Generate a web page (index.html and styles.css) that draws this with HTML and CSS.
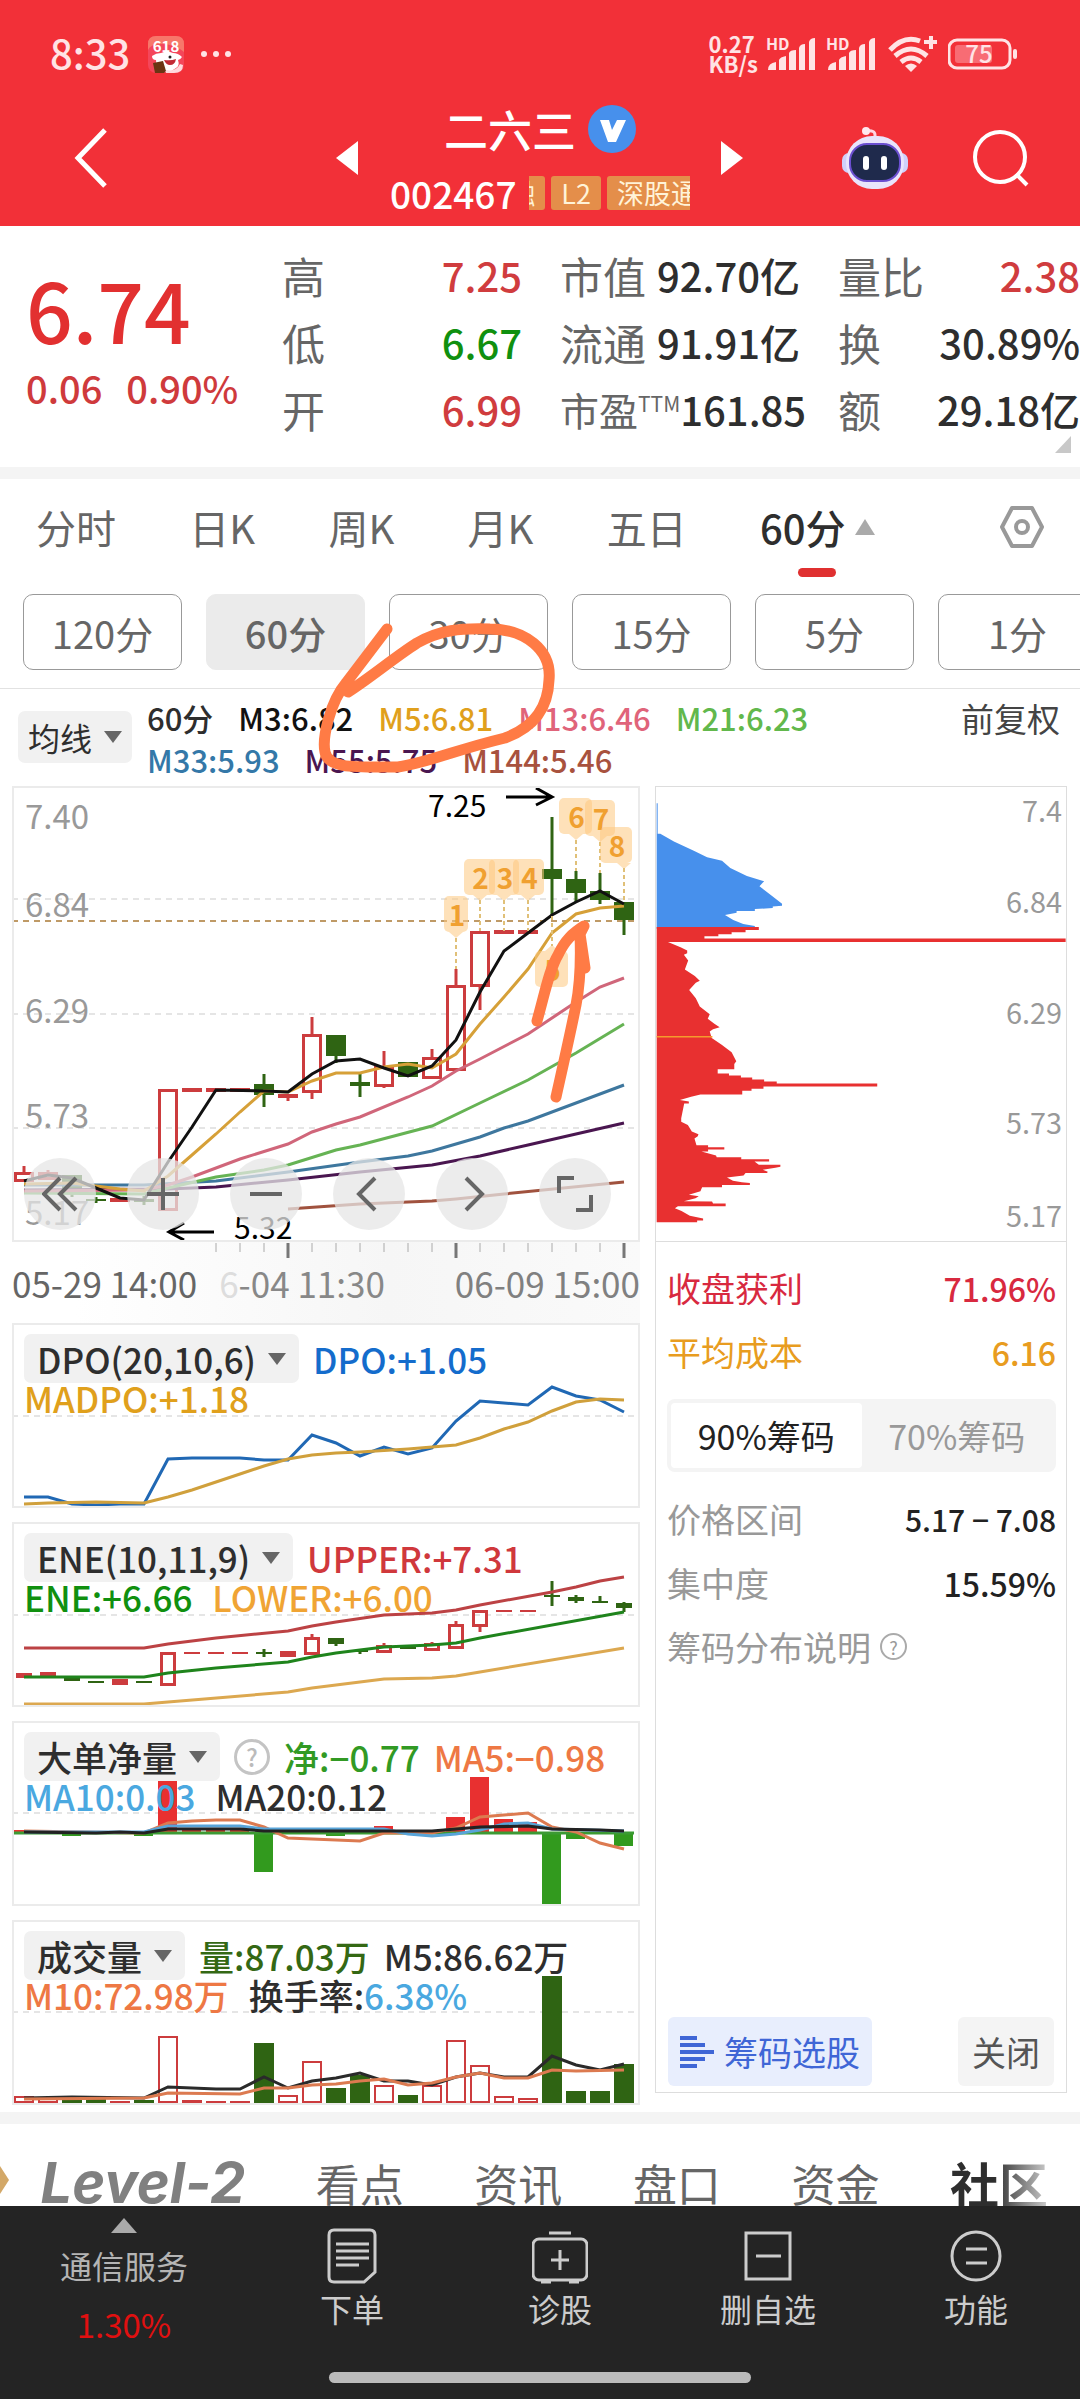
FILE: index.html
```html
<!DOCTYPE html>
<html lang="zh-CN">
<head>
    <meta charset="UTF-8">
    <meta name="viewport" content="width=device-width, initial-scale=1.0">
    <title>二六三 002467</title>
    <link rel="stylesheet" href="styles.css">
</head>
<body>
    <header class="top">
        <div class="status">
            <span class="clock">8:33</span>
            <svg class="app-icon" viewBox="0 0 36 37" width="36" height="37">
                <rect width="36" height="37" rx="8" fill="#f4465a"/>
                <path d="M8 0h20q8 0 8 8v8q-10-8-22-8T0 14V8q0-8 8-8z" fill="#f7776a"/>
                <text x="18" y="16" text-anchor="middle" class="app-num">618</text>
                <path d="M4 20q4-3 9-3 6-3 12 0 5 0 9 4-2 3-4 3 2 6-2 8l-6 4H12q-4-4-4-12-4 0-4-4z" fill="#fff"/>
                <path d="M16 24q7 1 12-1-1 6-6 6-4 0-6-5z" fill="#c22a35"/>
                <circle cx="22" cy="21" r="1.5" fill="#222"/>
                <path d="M5 27l10-2 3 10-2 2H7z" fill="#6b3513"/>
                <path d="M18 34q10 2 14-6l3 1q0 8-9 8h-8z" fill="#ffd9dc"/>
            </svg>
            <svg class="dots" viewBox="0 0 32 8" width="32" height="8" fill="#ffe3e5">
                <circle cx="4" cy="4" r="3"/><circle cx="16" cy="4" r="3"/><circle cx="28" cy="4" r="3"/>
            </svg>
            <span class="speed"><b>0.27</b><b>KB/s</b></span>
            <svg viewBox="0 0 52 36" width="52" height="36" class="signal">
                <text x="0" y="14" class="hd">HD</text>
                <path d="M2 34q0-7 8-8v8zM13 34V24q1-3 7-4v14zM23 34V17q1-3 7-3v20zM33 34V12q1-4 6-4v26zM43 34V6q1-4 6-4v32z"/>
            </svg>
            <svg viewBox="0 0 52 36" width="52" height="36" class="signal second">
                <text x="0" y="14" class="hd">HD</text>
                <path d="M2 34q0-7 8-8v8zM13 34V24q1-3 7-4v14zM23 34V17q1-3 7-3v20zM33 34V12q1-4 6-4v26zM43 34V6q1-4 6-4v32z"/>
            </svg>
            <svg viewBox="0 0 50 36" width="50" height="36" class="wifi">
                <g fill="none" stroke="#ffe3e5" stroke-width="5">
                    <path d="M2 14Q16-1 32 5"/><path d="M7 20Q23 6 39 20"/><path d="M13 26Q23 18 33 26"/>
                    <path d="M36 6h13M43 0v13" stroke-width="4"/>
                </g>
                <path d="M17 30q6-5 12 0l-6 6z" fill="#ffe3e5"/>
            </svg>
            <svg viewBox="0 0 70 32" width="70" height="32" class="battery">
                <rect x="1" y="2" width="61" height="28" rx="8" fill="none" stroke="#ffe3e5" stroke-width="3"/>
                <rect x="7" y="7" width="37" height="18" rx="3" fill="#f86c74"/>
                <rect x="65" y="11" width="4" height="10" rx="2" fill="#ffe3e5"/>
                <text x="31" y="25" text-anchor="middle" class="level">75</text>
            </svg>
        </div>
        <div class="title-bar">
            <button class="back" aria-label="返回">
                <svg viewBox="0 0 34 60" width="34" height="60"><path d="M31 2L4 30l27 28" fill="none" stroke="#fff" stroke-width="5"/></svg>
            </button>
            <button class="prev" aria-label="上一只">
                <svg viewBox="0 0 22 34" width="22" height="34"><path d="M22 0v34L0 17z" fill="#fff"/></svg>
            </button>
            <div class="stock">
                <h1>二六三
                    <svg viewBox="0 0 48 48" width="48" height="48">
                        <circle cx="24" cy="24" r="24" fill="#4790ec"/>
                        <path d="M12 15h9l3 10 5-10h9l-10 22h-8z" fill="#fff"/>
                    </svg>
                </h1>
                <div class="code-row">
                    <span class="code">002467</span>
                    <div class="tags">
                        <span>融</span><span>L2</span><span>深股通</span>
                    </div>
                </div>
            </div>
            <button class="next" aria-label="下一只">
                <svg viewBox="0 0 22 34" width="22" height="34"><path d="M0 0v34l22-17z" fill="#fff"/></svg>
            </button>
            <button aria-label="智能助手">
                <svg viewBox="0 0 66 62" width="66" height="62">
                    <path d="M33 12V8q0-5-8-4" fill="none" stroke="#ffd5e2" stroke-width="3"/>
                    <circle cx="24" cy="4" r="4" fill="#ffe8ef"/>
                    <rect x="0" y="26" width="14" height="20" rx="7" fill="#cfd0fb"/>
                    <rect x="52" y="26" width="14" height="20" rx="7" fill="#cfd0fb"/>
                    <rect x="4" y="9" width="58" height="53" rx="26" fill="#e9e4fb"/>
                    <rect x="8" y="17" width="50" height="37" rx="17" fill="#1f2a4c" stroke="#6b4fd0" stroke-width="2"/>
                    <rect x="21" y="29" width="6" height="14" rx="3" fill="#fff"/>
                    <rect x="39" y="29" width="6" height="14" rx="3" fill="#fff"/>
                </svg>
            </button>
            <button aria-label="搜索">
                <svg viewBox="0 0 56 58" width="56" height="58" fill="none" stroke="#fff" stroke-width="4">
                    <circle cx="27" cy="28" r="25"/><path d="M43 45l11 11"/>
                </svg>
            </button>
        </div>
    </header>

    <section class="quote">
        <div class="price">
            <strong>6.74</strong>
            <p><span>0.06</span><span>0.90%</span></p>
        </div>
        <dl>
            <div><dt>高</dt><dd class="up">7.25</dd></div>
            <div><dt>低</dt><dd class="down">6.67</dd></div>
            <div><dt>开</dt><dd class="up">6.99</dd></div>
        </dl>
        <dl>
            <div><dt>市值</dt><dd>92.70亿</dd></div>
            <div><dt>流通</dt><dd>91.91亿</dd></div>
            <div><dt class="pe">市盈<sup>TTM</sup></dt><dd>161.85</dd></div>
        </dl>
        <dl>
            <div><dt>量比</dt><dd class="up">2.38</dd></div>
            <div><dt>换</dt><dd>30.89%</dd></div>
            <div><dt>额</dt><dd>29.18亿</dd></div>
        </dl>
        <svg class="more" viewBox="0 0 16 17" width="16" height="17"><path d="M16 0v17H0z" fill="#c8c8c8"/></svg>
    </section>

    <main class="kline">
        <nav class="periods">
            <button>分时</button>
            <button>日K</button>
            <button>周K</button>
            <button>月K</button>
            <button>五日</button>
            <button class="active"><span>60分</span>
                <svg viewBox="0 0 20 16" width="20" height="16"><path d="M10 0l10 16H0z" fill="#aaa"/></svg>
            </button>
            <button class="settings" aria-label="设置">
                <svg viewBox="0 0 44 42" width="44" height="42" fill="none" stroke="#999" stroke-width="4">
                    <path d="M12 2h20l10 19-10 19H12L2 21z" stroke-linejoin="round"/><circle cx="22" cy="21" r="6"/>
                </svg>
            </button>
        </nav>
        <div class="minutes">
            <button>120分</button>
            <button class="active">60分</button>
            <button>30分</button>
            <button>15分</button>
            <button>5分</button>
            <button>1分</button>
        </div>

        <div class="ma-bar">
            <label class="picker">
                <select aria-label="主图指标"><option>均线</option></select>
                <svg viewBox="0 0 18 12" width="18" height="12"><path d="M0 0h18L9 12z"/></svg>
            </label>
            <div class="ma-list">
                <p><span class="dark">60分</span><span class="c-m3">M3:6.82</span><span class="c-m5">M5:6.81</span><span class="c-m13">M13:6.46</span><span class="c-m21">M21:6.23</span></p>
                <p><span class="c-m33">M33:5.93</span><span class="c-m55">M55:5.75</span><span class="c-m144">M144:5.46</span></p>
            </div>
            <span class="adjust">前复权</span>
        </div>

        <div class="columns">
            <div class="charts">
                <div class="chart">
                    <svg id="main-chart" viewBox="14 788 624 452"></svg>
                    <div class="tools">
                        <button aria-label="最早"><svg viewBox="0 0 36 36"><path d="M18 2L2 18l16 16M34 2L18 18l16 16"/></svg></button>
                        <button aria-label="放大"><svg viewBox="0 0 36 36"><path d="M18 2v32M2 18h32"/></svg></button>
                        <button aria-label="缩小"><svg viewBox="0 0 36 36"><path d="M2 18h32"/></svg></button>
                        <button aria-label="左移"><svg viewBox="0 0 36 36"><path d="M24 2L8 18l16 16"/></svg></button>
                        <button aria-label="右移"><svg viewBox="0 0 36 36"><path d="M12 2l16 16-16 16"/></svg></button>
                        <button aria-label="全屏"><svg viewBox="0 0 36 36"><path d="M2 17V2h15M34 19v15H19"/></svg></button>
                    </div>
                </div>
                <div class="axis">
                    <svg id="ticks" viewBox="12 1242 628 18"></svg>
                    <p><span>05-29 14:00</span><span class="mid"><i>6</i>-04 11:30</span><span class="last">06-09 15:00</span></p>
                </div>

                <div class="chart sub">
                    <svg id="dpo-chart" viewBox="14 1325 624 181"></svg>
                    <div class="legend">
                        <p>
                            <label class="picker">
                                <select aria-label="副图指标一"><option>DPO(20,10,6)</option></select>
                                <svg viewBox="0 0 18 12" width="18" height="12"><path d="M0 0h18L9 12z"/></svg>
                            </label>
                            <span class="c-dpo">DPO:+1.05</span>
                        </p>
                        <p><span class="c-m5">MADPO:+1.18</span></p>
                    </div>
                </div>

                <div class="chart sub">
                    <svg id="ene-chart" viewBox="14 1524 624 181"></svg>
                    <div class="legend">
                        <p>
                            <label class="picker">
                                <select aria-label="副图指标二"><option>ENE(10,11,9)</option></select>
                                <svg viewBox="0 0 18 12" width="18" height="12"><path d="M0 0h18L9 12z"/></svg>
                            </label>
                            <span class="c-upper">UPPER:+7.31</span>
                        </p>
                        <p><span class="c-ene">ENE:+6.66</span><span class="c-lower">LOWER:+6.00</span></p>
                    </div>
                </div>

                <div class="chart sub">
                    <svg id="net-chart" viewBox="14 1723 624 181"></svg>
                    <div class="legend">
                        <p>
                            <label class="picker">
                                <select aria-label="副图指标三"><option>大单净量</option></select>
                                <svg viewBox="0 0 18 12" width="18" height="12"><path d="M0 0h18L9 12z"/></svg>
                            </label>
                            <button class="help" aria-label="说明">?</button>
                            <span class="c-net">净:−0.77</span><span class="c-orange">MA5:−0.98</span>
                        </p>
                        <p><span class="c-sky">MA10:0.03</span><span class="dark">MA20:0.12</span></p>
                    </div>
                </div>

                <div class="chart sub">
                    <svg id="vol-chart" viewBox="14 1922 624 181"></svg>
                    <div class="legend">
                        <p>
                            <label class="picker">
                                <select aria-label="副图指标四"><option>成交量</option></select>
                                <svg viewBox="0 0 18 12" width="18" height="12"><path d="M0 0h18L9 12z"/></svg>
                            </label>
                            <span class="c-vol">量:87.03万</span><span class="dark">M5:86.62万</span>
                        </p>
                        <p><span class="c-orange">M10:72.98万</span><span class="dark">换手率:<em class="c-sky">6.38%</em></span></p>
                    </div>
                </div>
            </div>

            <aside class="chips">
                <svg class="profile" viewBox="0 0 412 456">
                    <g transform="scale(0.3333) translate(-46 -46)">
                        <path fill="#4790ec" d="M48 95h3v92h8L100 210l60 28 40 20 45 10 25 22 50 24 52 16-14 15 38 30 30 23v6l-28 2v5l-54 3v6h-55v5l-35 7 25 15 30 12 35 6v8H48z"/>
                        <path fill="#e83030" d="M48 468h308v9h-40v7h-42v6h-40v6h-42v7h1089v10H82l38 16 20 10v8l-10 5 13 17-10 27 30 20 15 14-12 6-20 22 20 25 12 25 30 23-6 14 20 15 16 10-20 6-10 7 6 20 30 20 20 15 10 8 14 27-6 8v16h-50v13h34v6h36v6h34v6h36v6h38v6h303v9H370v7h-36v6h-28v11H180l-28 7-34 10 27 4v6h-14l-9 45v10l20 10 12 20 20 8-2 6-10 7 6 20h35v6h49v7h-49v6h-20l44 12 2 5h74v6h84v7h-44l13 10h65v6l-15 3-38 6 15 6-2 4h-65l-6 7-50 6 18 10 27 5 24 2v6h-84v7h-60l-5 12-35 10 30 5-10 6-35 9 85 1 3 6h38v8H112l-9 6 20 8 25 15 40 8v6h-18v5H48z"/>
                        <path stroke="#f59a2c" stroke-width="5" d="M48 799h168"/>
                    </g>
                    <g class="scale-right">
                        <text x="408" y="35">7.4</text>
                        <text x="408" y="127">6.84</text>
                        <text x="408" y="238">6.29</text>
                        <text x="408" y="349">5.73</text>
                        <text x="408" y="442">5.17</text>
                    </g>
                </svg>
                <div class="stats">
                    <p class="c-profit"><span>收盘获利</span><b>71.96%</b></p>
                    <p class="c-cost"><span>平均成本</span><b>6.16</b></p>
                    <div class="segment">
                        <button class="active">90%筹码</button>
                        <button>70%筹码</button>
                    </div>
                    <p><span>价格区间</span><b class="range">5.17 − 7.08</b></p>
                    <p><span>集中度</span><b>15.59%</b></p>
                    <p class="note"><span>筹码分布说明</span><button class="help small" aria-label="筹码分布说明">?</button></p>
                </div>
                <div class="chip-actions">
                    <button class="pick">
                        <svg viewBox="0 0 34 34" width="34" height="34"><path d="M0 3h17M0 10h25M0 17h34M0 24h25M0 31h17" stroke="#3f66d6" stroke-width="4"/></svg>
                        筹码选股
                    </button>
                    <button class="close">关闭</button>
                </div>
            </aside>
        </div>

        <svg class="doodle" viewBox="0 479 1080 700">
            <path d="M387 629L346 683C330 702 322 738 325 752C328 769 355 767 398 767C430 762 455 750 505 738C532 728 548 710 549 680C552 650 525 629 490 629C460 628 440 630 417 643C395 657 370 678 348 692"/>
            <path d="M537 1021C545 993 549 970 558 955C565 940 573 933 584 926L580 934L585 968M580 934C581 960 580 985 576 1005C570 1035 562 1070 556 1097"/>
        </svg>
    </main>

    <nav class="news-tabs">
        <svg viewBox="0 0 10 28" width="10" height="28"><path d="M0 0l9 14-9 14z" fill="#d3a868"/></svg>
        <a href="#" class="level2">Level-2</a>
        <a href="#">看点</a>
        <a href="#">资讯</a>
        <a href="#">盘口</a>
        <a href="#">资金</a>
        <a href="#" class="active">社区</a>
    </nav>

    <footer class="bottom">
        <div class="actions">
            <a href="#" class="sector">
                <svg viewBox="0 0 26 15" width="26" height="15"><path d="M13 0l13 15H0z" fill="#aaa"/></svg>
                <span>通信服务</span>
                <b>1.30%</b>
            </a>
            <a href="#">
                <svg viewBox="0 0 56 56" width="56" height="56">
                    <path d="M10 2h36q5 0 5 5v37L40 54H10q-5 0-5-5V7q0-5 5-5z"/><path d="M12 16h33M12 23h33M12 30h33M12 37h23"/>
                </svg>
                <span>下单</span>
            </a>
            <a href="#">
                <svg viewBox="0 0 56 56" width="56" height="56">
                    <rect x="1" y="11" width="54" height="41" rx="6"/><path d="M17 5h22M28 22v20M19 32h18M9 54h10M37 54h10"/>
                </svg>
                <span>诊股</span>
            </a>
            <a href="#">
                <svg viewBox="0 0 56 56" width="56" height="56"><path d="M6 5h44v46H6zM16 28h25"/></svg>
                <span>删自选</span>
            </a>
            <a href="#">
                <svg viewBox="0 0 56 56" width="56" height="56"><circle cx="28" cy="28" r="24"/><path d="M18 21h21M18 35h21"/></svg>
                <span>功能</span>
            </a>
        </div>
        <div class="home-bar"></div>
    </footer>

    <script src="script.js"></script>
</body>
</html>
```
FILE: styles.css
```css
/* Base Styles */
* {
    margin: 0;
    padding: 0;
    box-sizing: border-box;
}

body {
    font-family: 'Noto Sans CJK SC', 'Noto Sans', sans-serif;
    background: #fff;
    color: #333;
    font-size: 32px;
    overflow-x: hidden;
}

button,
select {
    font: inherit;
    color: inherit;
    background: none;
    border: none;
    appearance: none;
    cursor: pointer;
}

a {
    color: inherit;
    text-decoration: none;
}

svg {
    display: block;
    flex-shrink: 0;
}

/* Header */
.top {
    background: #f23038;
    color: #fff;
    padding-bottom: 14px;
}

.status {
    display: flex;
    align-items: center;
    height: 100px;
    padding: 8px 62px 0 50px;
    color: #ffe3e5;
}

.clock {
    font-size: 40px;
    font-weight: 500;
    line-height: 48px;
    padding-bottom: 4px;
}

.app-icon {
    margin-left: 18px;
}

.app-num {
    font-size: 15px;
    font-weight: 700;
    fill: #fff;
}

.dots {
    margin-left: 16px;
}

.speed {
    display: flex;
    flex-direction: column;
    margin-left: auto;
    font-size: 22px;
    line-height: 20px;
    padding-bottom: 2px;
}

.signal {
    margin-left: 8px;
    fill: #ffe3e5;
}

.hd {
    font-size: 16px;
    font-weight: 700;
}

.wifi {
    margin-left: 10px;
}

.battery {
    margin-left: 10px;
}

.level {
    font-size: 24px;
    font-weight: 500;
    fill: #ffe3e5;
}

.title-bar {
    display: grid;
    grid-template-columns: 336fr 54fr 300fr 152fr 131fr 107fr;
    align-items: center;
    height: 112px;
}

.title-bar button {
    padding-top: 4px;
}

.title-bar .back {
    padding-left: 74px;
}

.title-bar .next {
    padding-left: 31px;
}

.stock h1 {
    display: flex;
    justify-content: center;
    align-items: center;
    gap: 12px;
    font-size: 44px;
    font-weight: 500;
    line-height: 54px;
    margin-bottom: 20px;
}

.code-row {
    display: flex;
    align-items: center;
    gap: 12px;
    height: 34px;
}

.code {
    font-size: 37px;
    font-weight: 500;
    line-height: 34px;
}

.tags {
    display: flex;
    justify-content: flex-end;
    gap: 6px;
    flex: 1;
    min-width: 0;
    overflow: hidden;
}

.tags span {
    flex-shrink: 0;
    padding: 0 10px;
    background: #e48e4a;
    border-radius: 3px;
    color: #fff3d8;
    font-size: 27px;
    line-height: 34px;
}

.tags span:last-child {
    margin-right: -18px;
}

/* Quote */
.quote {
    position: relative;
    display: grid;
    grid-template-columns: minmax(0, 218fr) minmax(0, 240fr) minmax(0, 240fr) minmax(0, 242fr);
    column-gap: 38px;
    padding: 16px 0 24px 26px;
    border-bottom: 12px solid #f4f4f4;
}

.price strong {
    display: block;
    font-size: 82px;
    font-weight: 500;
    line-height: 90px;
    padding-top: 22px;
    color: #e23030;
}

.price p {
    display: flex;
    gap: 24px;
    margin-top: 9px;
    font-size: 38px;
    font-weight: 500;
    line-height: 50px;
    color: #cf3a3c;
}

.quote dl div {
    display: flex;
    justify-content: space-between;
    font-size: 43px;
    line-height: 67px;
    white-space: nowrap;
}

.quote dt {
    color: #666;
}

.quote .pe {
    font-size: 39px;
}

.quote dt sup {
    font-size: 21px;
    line-height: 22px;
    vertical-align: 14px;
}

.quote dd {
    font-size: 40px;
    font-weight: 500;
    color: #2e2e2e;
}

.quote .up {
    color: #d03c3e;
}

.quote .down {
    color: #10900f;
}

.more {
    position: absolute;
    right: 9px;
    bottom: 14px;
}

/* Periods */
.kline {
    position: relative;
    border-bottom: 12px solid #f4f4f4;
}

.periods {
    display: flex;
    justify-content: space-between;
    align-items: center;
    height: 115px;
    padding: 0 36px 19px;
    font-size: 40px;
    line-height: 52px;
    color: #666;
}

.periods .active {
    display: flex;
    align-items: center;
    gap: 9px;
    font-weight: 500;
    color: #2e2e2e;
    position: relative;
}

.periods .active::after {
    content: "";
    position: absolute;
    left: 38px;
    bottom: -24px;
    width: 38px;
    height: 9px;
    border-radius: 5px;
    background: #e03030;
}

.settings {
    margin-left: 52px;
}

.minutes {
    display: flex;
    gap: 24px;
    padding: 0 0 18px 23px;
    overflow: hidden;
    border-bottom: 1px solid #e2e2e2;
}

.minutes button {
    flex: 0 0 159px;
    height: 76px;
    border: 1px solid #999;
    border-radius: 10px;
    font-size: 38px;
    color: #666;
}

.minutes .active {
    background: #ebebeb;
    border-color: #ebebeb;
    font-weight: 500;
}

/* Moving averages */
.picker {
    display: inline-flex;
    align-items: center;
    gap: 11px;
    background: #f1f1f1;
    border-radius: 7px;
    color: #2e2e2e;
    cursor: pointer;
}

.picker path {
    fill: #666;
}

.ma-bar {
    display: flex;
    align-items: flex-start;
    height: 97px;
    padding: 0 20px 0 18px;
}

.ma-bar .picker {
    height: 52px;
    margin: 22px 15px 0 0;
    padding: 0 10px;
}

.ma-list {
    padding-top: 8px;
}

.ma-list p {
    display: flex;
    gap: 25px;
    font-size: 31px;
    line-height: 42px;
    font-weight: 500;
}

.adjust {
    margin-left: auto;
    padding-top: 8px;
    font-size: 33px;
    line-height: 42px;
    color: #444;
}

.dark { color: #2e2e2e; }
.c-m3 { color: #111; }
.c-m5 { color: #e0a01c; }
.c-m13 { color: #e0647a; }
.c-m21 { color: #62b84c; }
.c-m33 { color: #3478a8; }
.c-m55 { color: #4a1650; }
.c-m144 { color: #a8523e; }
.c-dpo { color: #146ccc; }
.c-upper { color: #d0383c; }
.c-ene { color: #10900f; }
.c-lower { color: #f0a434; }
.c-net { color: #329a24; }
.c-orange { color: #ee7844; }
.c-sky { color: #4aa8e0; }
.c-vol { color: #346814; }

/* Charts */
.columns {
    display: grid;
    grid-template-columns: 628fr 412fr;
    gap: 15px;
    padding: 0 13px 7px 12px;
}

.charts {
    min-width: 0;
}

.chart {
    display: grid;
    border: 2px solid #ebebeb;
}

.chart > * {
    grid-area: 1 / 1;
}

.chart > svg {
    width: 100%;
}

.chart text {
    font-size: 33px;
    fill: #999;
}

.chart .mark {
    font-size: 30px;
    fill: #000;
}

.chart .badge {
    font-size: 28px;
    font-weight: 700;
    fill: #f0a030;
    text-anchor: middle;
}

.tools {
    display: flex;
    gap: 31px;
    align-self: end;
    padding: 0 0 10px 10px;
}

.tools button {
    display: grid;
    place-items: center;
    width: 72px;
    height: 72px;
    border-radius: 50%;
    background: rgba(230, 230, 230, 0.75);
}

.tools svg {
    width: 36px;
    height: 36px;
    fill: none;
    stroke: #666;
    stroke-width: 4;
}

.axis {
    height: 81px;
    background: linear-gradient(to right, #fff 10%, #f6f6f6 60%, #fafafa);
}

.axis svg {
    width: 100%;
}

.axis p {
    display: flex;
    justify-content: space-between;
    font-size: 35px;
    line-height: 46px;
    color: #666;
    white-space: nowrap;
}

.axis .mid {
    margin-right: 48px;
    color: #888;
}

.axis .mid i {
    font-style: normal;
    color: #ddd;
}

.axis .last {
    color: #808080;
}

.sub + .sub {
    margin-top: 14px;
}

.legend {
    padding: 9px 10px;
    font-size: 35px;
    font-weight: 500;
    white-space: nowrap;
}

.legend p {
    display: flex;
    align-items: center;
    gap: 14px;
    height: 49px;
}

.legend p + p {
    gap: 20px;
    height: 28px;
}

.legend .picker {
    height: 49px;
    padding: 0 13px;
}

.legend em {
    font-style: normal;
}

.help {
    width: 36px;
    height: 36px;
    border: 3px solid #c4c4c4;
    border-radius: 50%;
    font-size: 24px;
    line-height: 28px;
    color: #bbb;
}

.help.small {
    width: 27px;
    height: 27px;
    border: 2px solid #aaa;
    font-size: 18px;
    line-height: 22px;
    color: #999;
}

/* Chip distribution */
.chips {
    display: flex;
    flex-direction: column;
    border: 1px solid #ddd;
    margin-bottom: 12px;
}

.profile {
    width: 100%;
    border-bottom: 1px solid #ddd;
}

.scale-right {
    font-size: 29px;
    fill: #999;
    text-anchor: end;
}

.stats {
    padding: 14px 10px 0 11px;
    font-size: 34px;
    color: #999;
}

.stats p {
    display: flex;
    justify-content: space-between;
    line-height: 64px;
}

.stats b {
    font-size: 32px;
    font-weight: 500;
    color: #222;
}

.stats .range {
    font-size: 30px;
}

.stats .c-profit,
.stats .c-profit b {
    color: #d8293f;
}

.stats .c-cost,
.stats .c-cost b {
    color: #e89c20;
}

.stats .note {
    justify-content: flex-start;
    align-items: center;
    gap: 9px;
}

.segment {
    display: flex;
    height: 73px;
    margin: 15px 0;
    padding: 4px;
    background: #f4f4f4;
    border-radius: 8px;
}

.segment button {
    flex: 1;
    border-radius: 4px;
}

.segment .active {
    background: #fff;
    color: #222;
}

.chip-actions {
    display: flex;
    justify-content: space-between;
    margin-top: auto;
    padding: 0 12px 6px;
    font-size: 34px;
}

.chip-actions button {
    display: flex;
    align-items: center;
    gap: 10px;
    height: 69px;
    padding: 0 12px;
    border-radius: 6px;
}

.pick {
    background: #e8eefd;
    color: #3f66d6;
}

.chip-actions .close {
    padding: 0 14px;
    background: #f4f4f4;
    color: #555;
}

/* Hand drawn marks over the chart */
.doodle {
    position: absolute;
    top: 0;
    left: 0;
    width: 100%;
    pointer-events: none;
    fill: none;
    stroke: #ff7b45;
    stroke-width: 11;
    stroke-linecap: round;
    stroke-linejoin: round;
}

/* News tabs */
.news-tabs {
    display: flex;
    justify-content: space-between;
    align-items: flex-start;
    height: 82px;
    padding: 26px 32px 0 0;
    overflow: hidden;
    font-size: 44px;
    line-height: 66px;
    color: #666;
}

.news-tabs svg {
    margin-top: 16px;
}

.news-tabs .level2 {
    margin-left: -40px;
    font-family: Inter, sans-serif;
    font-style: italic;
    font-weight: 700;
    font-size: 56px;
    color: #808080;
}

.news-tabs .active {
    font-size: 49px;
    font-weight: 700;
    background: linear-gradient(to right, #2e2e2e 45%, #ccc);
    background-clip: text;
    color: transparent;
}

/* Bottom bar */
.bottom {
    background: #242424;
    color: #ccc;
    padding-bottom: 16px;
}

.actions {
    display: grid;
    grid-template-columns: 248fr 208fr 208fr 208fr 208fr;
    height: 166px;
}

.actions a {
    display: flex;
    flex-direction: column;
    align-items: center;
    gap: 3px;
    padding-top: 22px;
    font-size: 32px;
    line-height: 42px;
}

.actions svg {
    fill: none;
    stroke: #ccc;
    stroke-width: 3;
}

.actions .sector {
    gap: 17px;
    padding-top: 12px;
    color: #b4b4b4;
}

.actions .sector svg {
    stroke: none;
    margin-bottom: -6px;
}

.sector b {
    font-weight: 400;
    font-size: 33px;
    color: #e01010;
}

.home-bar {
    width: 39%;
    height: 11px;
    margin: 0 auto;
    border-radius: 6px;
    background: #bbb;
}
```
FILE: script.js
```js
const RED = '#cc3c3e';
const GREEN = '#2f6413';

const x = i => 24 + i * 24;

function add(svg, tag, attrs, text) {
    const el = document.createElementNS('http://www.w3.org/2000/svg', tag);
    for (const key in attrs) el.setAttribute(key, attrs[key]);
    if (text) el.textContent = text;
    svg.appendChild(el);
}

// points: [index, y, index, y, ...]
function line(svg, color, points, width = 3) {
    const list = [];
    for (let k = 0; k < points.length; k += 2) list.push(x(points[k]) + ',' + points[k + 1]);
    add(svg, 'polyline', { points: list.join(' '), fill: 'none', stroke: color, 'stroke-width': width });
}

function dash(svg, y, color = '#ddd', width = 1.5) {
    add(svg, 'line', { x1: 12, x2: 640, y1: y, y2: y, stroke: color, 'stroke-width': width, 'stroke-dasharray': '6 5' });
}

// candle: [index, kind, top, bottom, high, low], kind h = hollow, r = red, g = green
function candles(svg, list, half, border) {
    list.forEach(([i, kind, top, bottom, high = top, low = bottom]) => {
        const color = kind === 'g' ? GREEN : RED;
        if (high < top) add(svg, 'line', { x1: x(i), x2: x(i), y1: high, y2: top, stroke: color, 'stroke-width': 3 });
        if (low > bottom) add(svg, 'line', { x1: x(i), x2: x(i), y1: bottom, y2: low, stroke: color, 'stroke-width': 3 });
        if (kind === 'h') {
            add(svg, 'rect', {
                x: x(i) - half + border / 2, y: top + border / 2,
                width: half * 2 - border, height: Math.max(bottom - top - border, 1),
                fill: 'none', stroke: color, 'stroke-width': border
            });
        } else {
            add(svg, 'rect', { x: x(i) - half, y: top, width: half * 2, height: bottom - top, fill: color });
        }
    });
}

// Main chart
const main = document.getElementById('main-chart');
[899, 1014, 1128].forEach(y => dash(main, y));
dash(main, 921, '#bf9a66', 2);
[['7.40', 829], ['6.84', 917], ['6.29', 1023], ['5.73', 1128], ['5.17', 1225]].forEach(([t, y]) => add(main, 'text', { x: 25, y: y }, t));

candles(main, [
    [0, 'h', 1172, 1182, 1166], [1, 'h', 1172, 1180, 1170], [2, 'g', 1175, 1190, 1175, 1197],
    [3, 'g', 1199, 1201, 1197, 1203], [4, 'r', 1198, 1202], [5, 'g', 1199, 1202, 1196, 1205],
    [6, 'h', 1089, 1211], [7, 'r', 1088, 1092], [8, 'r', 1088, 1092], [9, 'r', 1088, 1092],
    [10, 'g', 1084, 1095, 1074, 1107], [11, 'r', 1094, 1098, 1094, 1101], [12, 'h', 1034, 1093, 1017, 1099],
    [13, 'g', 1035, 1056, 1035, 1063], [14, 'g', 1082, 1086, 1074, 1097], [15, 'h', 1066, 1087, 1051, 1088],
    [16, 'g', 1062, 1077], [17, 'h', 1057, 1079, 1049], [18, 'h', 985, 1071, 969], [19, 'h', 931, 987, 931, 1010],
    [20, 'r', 930, 934], [21, 'r', 930, 934], [22, 'g', 869, 879, 817, 915], [23, 'g', 879, 893, 871, 902],
    [24, 'g', 891, 900, 873, 904], [25, 'g', 902, 920, 902, 935]
], 10, 3);

line(main, '#a0523e', [11, 1209, 14, 1204, 17, 1201, 18, 1199, 20, 1194, 25, 1182]);
line(main, '#4a1650', [0, 1190, 6, 1189, 8, 1187, 11, 1180, 14, 1172, 17, 1165, 19, 1156, 21, 1145, 25, 1123]);
line(main, '#3e779e', [0, 1185, 5, 1185, 8, 1181, 11, 1172, 14, 1162, 16, 1156, 17, 1151, 19, 1137, 20, 1128, 21, 1121, 25, 1085]);
line(main, '#66b354', [0, 1193, 5, 1194, 6, 1188, 8, 1177, 10, 1170, 11, 1165, 13, 1150, 14, 1145, 17, 1126, 19, 1103, 21, 1080, 23, 1053, 25, 1024]);
line(main, '#d0667a', [0, 1191, 5, 1190, 6, 1185, 7, 1177, 9, 1159, 11, 1144, 12, 1132, 13, 1124, 14, 1117, 16, 1097, 17, 1086, 18, 1071, 19, 1059, 21, 1034, 23, 1002, 24, 987, 25, 978]);
line(main, '#d6a038', [0, 1184, 2, 1183, 4, 1189, 5, 1191, 6, 1176, 7, 1155, 8, 1134, 9, 1112, 10, 1091, 11, 1092, 12, 1081, 13, 1073, 14, 1073, 15, 1067, 16, 1064, 17, 1068, 18, 1054, 19, 1024, 20, 997, 21, 969, 22, 933, 23, 914, 24, 908, 25, 906]);
line(main, '#111', [0, 1181, 1, 1175, 2, 1178, 3, 1188, 4, 1198, 5, 1200, 6, 1162, 7, 1127, 8, 1090, 10, 1091, 11, 1092, 12, 1074, 13, 1061, 14, 1059, 15, 1068, 16, 1076, 17, 1066, 18, 1040, 19, 992, 20, 951, 21, 933, 22, 915, 23, 902, 24, 891, 25, 904]);

// Sequence badges: [text, left, top, width, column, stem start, stem end]
[
    ['1', 444, 896, 24, 18, 938, 969], ['2', 464, 859, 31, 19, 900, 931], ['3', 489, 859, 30, 20, 900, 931],
    ['4', 513, 859, 31, 21, 900, 931], ['5', 535, 951, 33, 22, 916, 946], ['6', 559, 798, 33, 23, 840, 871],
    ['7', 585, 800, 30, 24, 842, 873], ['8', 600, 827, 32, 25, 868, 902]
].forEach(([t, left, top, width, col, from, to]) => {
    add(main, 'rect', { x: left, y: top, width: width, height: 36, rx: 5, fill: '#fdc880', 'fill-opacity': 0.55 });
    const tip = t === '5' ? `M${x(col) - 7} ${top}l7 -6l7 6z` : `M${x(col) - 7} ${top + 36}l7 6l7 -6z`;
    add(main, 'path', { d: tip, fill: '#fdc880', 'fill-opacity': 0.55 });
    add(main, 'line', { x1: x(col), x2: x(col), y1: from, y2: to, stroke: '#e0c078', 'stroke-width': 2, 'stroke-dasharray': '4 3' });
    add(main, 'text', { x: left + width / 2 + 1, y: top + 30, class: 'badge' }, t);
});

add(main, 'text', { x: 428, y: 817, class: 'mark' }, '7.25');
add(main, 'path', { d: 'M506 797h46M536 788l16 9l-16 8', fill: 'none', stroke: '#000', 'stroke-width': 3 });
add(main, 'text', { x: 234, y: 1239, class: 'mark' }, '5.32');
add(main, 'path', { d: 'M214 1232h-45M184 1223l-15 9l15 8', fill: 'none', stroke: '#000', 'stroke-width': 3 });

// Time ticks
const ticks = document.getElementById('ticks');
for (let i = 8; i <= 25; i++) {
    const big = i === 11 || i === 18 || i === 25;
    add(ticks, 'line', { x1: x(i), x2: x(i), y1: 1243, y2: big ? 1258 : 1252, stroke: big ? '#777' : '#aaa', 'stroke-width': big ? 3 : 1 });
}

// DPO
const dpo = document.getElementById('dpo-chart');
dash(dpo, 1416);
line(dpo, '#2068b4', [0, 1497, 1, 1497, 2, 1504, 3, 1505, 4, 1504, 5, 1504, 6, 1459, 7, 1458, 9, 1458, 10, 1460, 11, 1460, 12, 1435, 13, 1443, 14, 1456, 15, 1447, 16, 1454, 17, 1448, 18, 1421, 19, 1401, 20, 1403, 21, 1405, 22, 1387, 23, 1396, 24, 1400, 25, 1412]);
line(dpo, '#d0a03c', [0, 1504, 1, 1503, 3, 1502, 5, 1503, 6, 1497, 7, 1490, 8, 1482, 9, 1474, 10, 1466, 11, 1459, 12, 1455, 13, 1453, 14, 1452, 16, 1449, 18, 1445, 19, 1438, 20, 1429, 21, 1422, 22, 1411, 23, 1402, 24, 1399, 25, 1400]);

// ENE
const ene = document.getElementById('ene-chart');
dash(ene, 1615);
candles(ene, [
    [0, 'r', 1673, 1678], [1, 'r', 1672, 1676], [2, 'g', 1676, 1681], [3, 'g', 1681, 1683], [4, 'r', 1679, 1685],
    [5, 'g', 1681, 1683], [6, 'h', 1652, 1686], [7, 'r', 1652, 1654], [8, 'r', 1652, 1654], [9, 'r', 1652, 1654],
    [10, 'g', 1652, 1654, 1649, 1657], [11, 'r', 1651, 1657], [12, 'h', 1637, 1655, 1634], [13, 'g', 1638, 1644, 1638, 1646],
    [14, 'g', 1650, 1652, 1649, 1654], [15, 'h', 1645, 1653, 1643], [16, 'g', 1647, 1649], [17, 'h', 1643, 1651, 1642],
    [18, 'h', 1624, 1649, 1621], [19, 'h', 1610, 1627, 1610, 1632], [20, 'r', 1610, 1612], [21, 'r', 1610, 1612],
    [22, 'g', 1595, 1597, 1581, 1606], [23, 'g', 1597, 1601, 1595, 1603], [24, 'g', 1601, 1603, 1596, 1603], [25, 'g', 1603, 1608, 1602, 1612]
], 8, 3);
line(ene, '#bc4244', [0, 1648, 5, 1648, 6, 1644, 8, 1638, 11, 1631, 12, 1626, 13, 1622, 15, 1615, 17, 1613, 18, 1610, 19, 1605, 22, 1592, 23, 1587, 24, 1581, 25, 1577]);
line(ene, '#1f841c', [0, 1677, 5, 1677, 6, 1673, 8, 1668, 11, 1662, 12, 1657, 13, 1653, 15, 1647, 17, 1645, 18, 1643, 19, 1638, 25, 1612]);
line(ene, '#dca850', [0, 1704, 5, 1704, 6, 1702, 11, 1692, 12, 1688, 15, 1679, 17, 1678, 18, 1676, 19, 1672, 25, 1648]);

// Net large orders, bars grow away from the zero line
const net = document.getElementById('net-chart');
const zero = 1833;
dash(net, 1813);
[[0, 1830], [2, 1836], [5, 1836], [6, 1778], [7, 1830], [8, 1830], [9, 1830], [10, 1872], [13, 1836], [15, 1826],
    [18, 1817], [19, 1777], [20, 1819], [21, 1822], [22, 1906], [23, 1839], [25, 1846]].forEach(([i, y]) => {
    add(net, 'rect', { x: x(i) - 10, y: Math.min(y, zero), width: 19, height: Math.abs(y - zero), fill: y < zero ? '#e83030' : '#329a1e' });
});
add(net, 'line', { x1: 12, x2: 634, y1: zero, y2: zero, stroke: '#3c9a34', 'stroke-width': 3 });
line(net, '#dc7a50', [0, 1831, 5, 1833, 6, 1823, 7, 1821, 8, 1820, 9, 1820, 10, 1827, 11, 1838, 14, 1841, 15, 1833, 17, 1833, 18, 1828, 19, 1817, 20, 1815, 21, 1813, 22, 1827, 23, 1832, 24, 1843, 25, 1849]);
line(net, '#58a4d8', [0, 1832, 5, 1832, 6, 1826, 9, 1826, 10, 1829, 15, 1829, 16, 1834, 17, 1836, 18, 1834, 19, 1830, 20, 1824, 21, 1823, 22, 1829, 25, 1831]);
line(net, '#222', [0, 1832, 3, 1833, 4, 1832, 5, 1833, 6, 1829, 9, 1829, 10, 1831, 17, 1831, 18, 1829, 19, 1827, 21, 1826, 22, 1829, 24, 1830, 25, 1831]);

// Volume
const vol = document.getElementById('vol-chart');
dash(vol, 2012);
candles(vol, [
    [0, 'h', 2096], [1, 'h', 2098], [2, 'g', 2096], [3, 'g', 2099], [4, 'r', 2101], [5, 'g', 2100], [6, 'h', 2036],
    [7, 'r', 2100], [8, 'r', 2101], [9, 'r', 2101], [10, 'g', 2043], [11, 'h', 2095], [12, 'h', 2061], [13, 'g', 2088],
    [14, 'g', 2075], [15, 'h', 2085], [16, 'g', 2095], [17, 'h', 2085], [18, 'h', 2040], [19, 'h', 2065], [20, 'h', 2096],
    [21, 'h', 2098], [22, 'g', 1976], [23, 'g', 2091], [24, 'g', 2091], [25, 'g', 2064]
].map(c => [...c, 2103]), 10, 2);
line(vol, '#2a2a2a', [0, 2098, 2, 2097, 5, 2098, 6, 2087, 8, 2089, 9, 2089, 10, 2077, 11, 2088, 12, 2081, 13, 2078, 14, 2073, 15, 2081, 16, 2081, 17, 2085, 18, 2077, 19, 2073, 20, 2077, 21, 2077, 22, 2056, 23, 2065, 24, 2070, 25, 2064]);
line(vol, '#dc7a50', [0, 2099, 5, 2098, 6, 2093, 9, 2094, 10, 2088, 11, 2088, 12, 2085, 13, 2084, 14, 2081, 15, 2079, 16, 2085, 17, 2083, 18, 2077, 19, 2073, 20, 2078, 21, 2078, 22, 2070, 23, 2071, 25, 2070]);
```
